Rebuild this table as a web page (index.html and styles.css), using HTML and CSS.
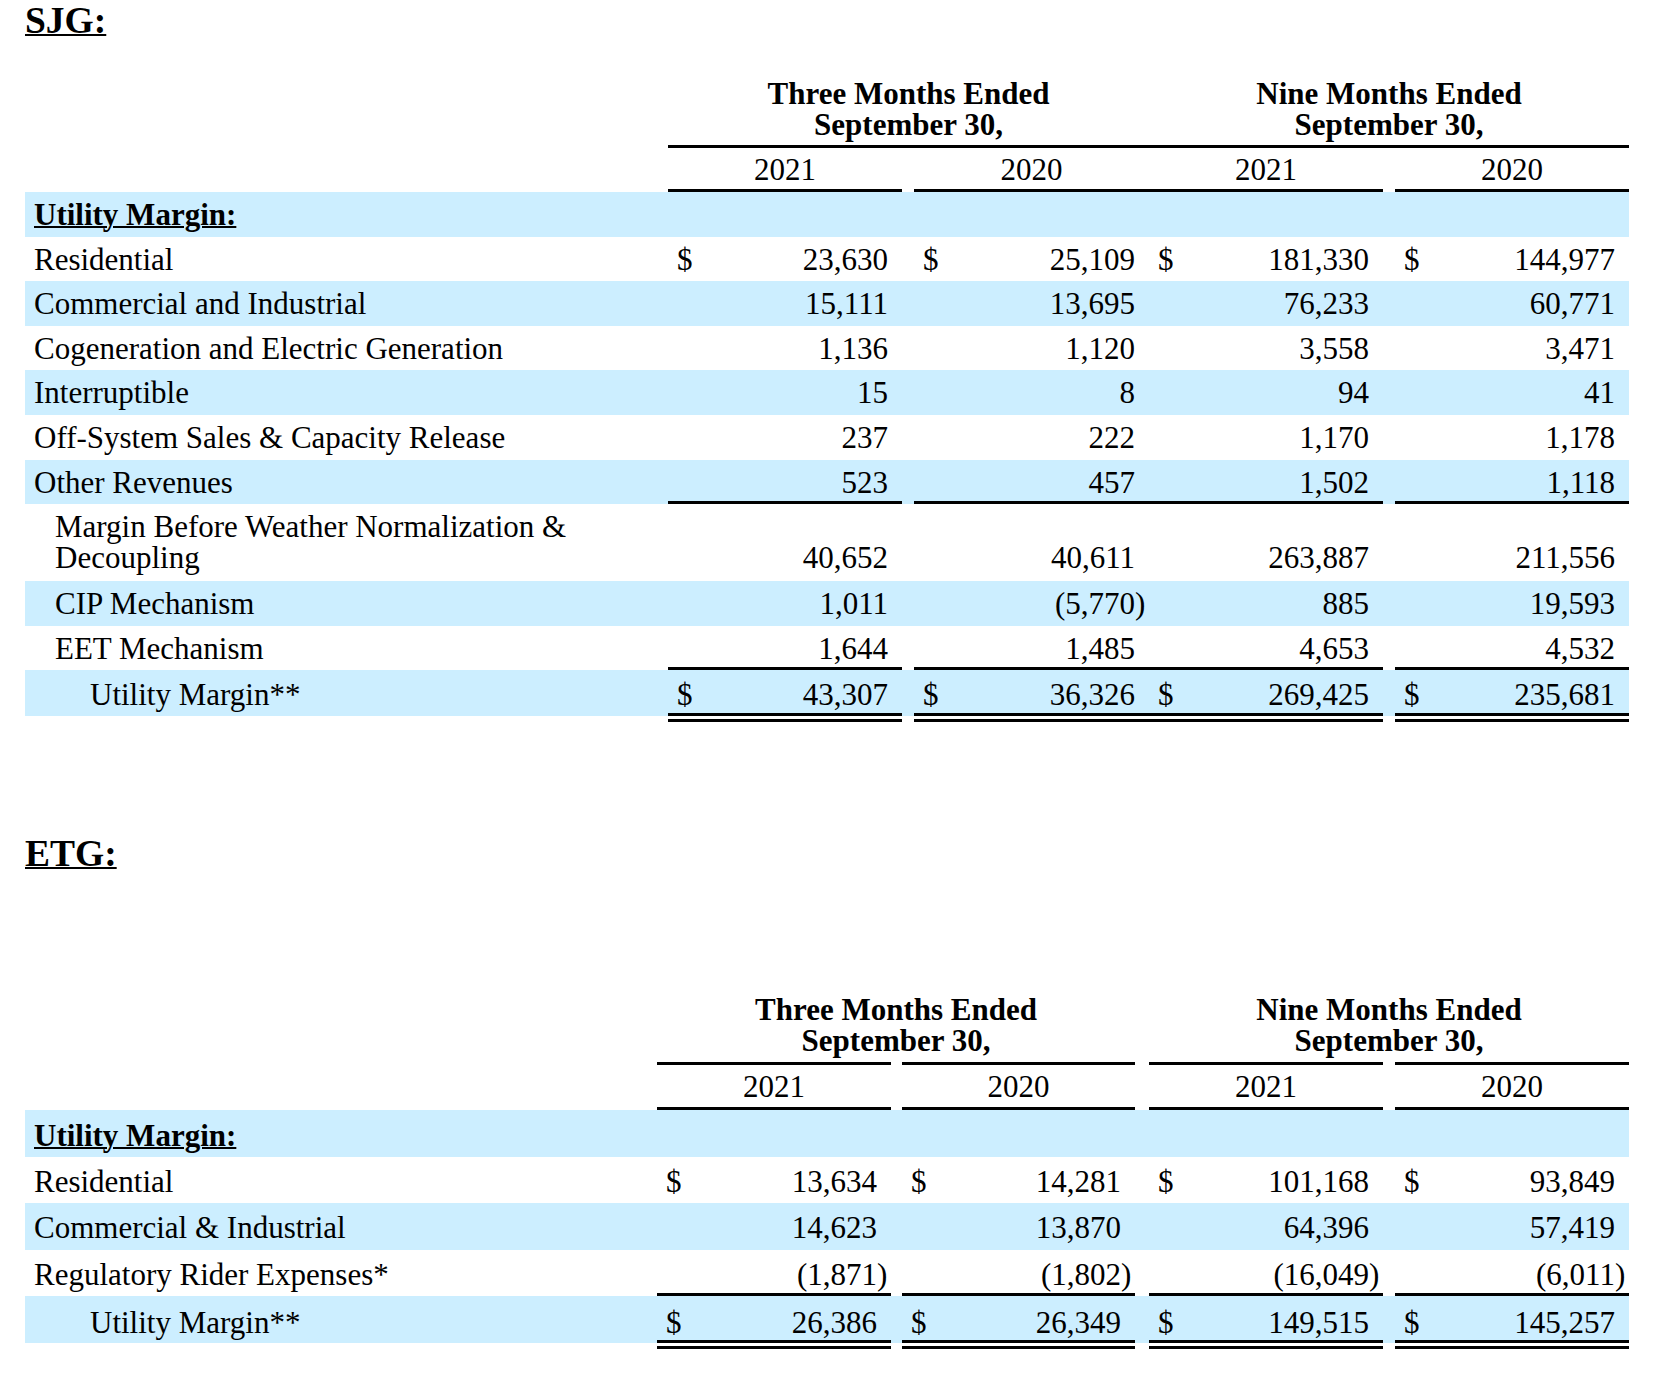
FILE: index.html
```html
<!DOCTYPE html>
<html>
<head>
<meta charset="utf-8">
<title>Utility Margin</title>
<link rel="stylesheet" href="styles.css">
</head>
<body>
<section class="sec sjg">
  <h2 class="title">SJG:</h2>
  <div class="hdr">
    <div class="lbl"></div>
    <div class="grp g1">Three Months Ended<br>September 30,</div>
    <div class="grp g2">Nine Months Ended<br>September 30,</div>
  </div>
  <div class="row yrs">
    <div class="lbl"></div>
    <div class="num c1">2021</div>
    <div class="num c2">2020</div>
    <div class="num c3">2021</div>
    <div class="num c4">2020</div>
  </div>
  <div class="row band"><div class="lbl"><b class="u">Utility Margin:</b></div></div>
  <div class="row">
    <div class="lbl">Residential</div>
    <div class="num c1"><span>$</span><span class="v">23,630</span></div>
    <div class="num c2"><span>$</span><span class="v">25,109</span></div>
    <div class="num c3"><span>$</span><span class="v">181,330</span></div>
    <div class="num c4"><span>$</span><span class="v">144,977</span></div>
  </div>
  <div class="row band">
    <div class="lbl">Commercial and Industrial</div>
    <div class="num c1"><span class="v">15,111</span></div>
    <div class="num c2"><span class="v">13,695</span></div>
    <div class="num c3"><span class="v">76,233</span></div>
    <div class="num c4"><span class="v">60,771</span></div>
  </div>
  <div class="row">
    <div class="lbl">Cogeneration and Electric Generation</div>
    <div class="num c1"><span class="v">1,136</span></div>
    <div class="num c2"><span class="v">1,120</span></div>
    <div class="num c3"><span class="v">3,558</span></div>
    <div class="num c4"><span class="v">3,471</span></div>
  </div>
  <div class="row band">
    <div class="lbl">Interruptible</div>
    <div class="num c1"><span class="v">15</span></div>
    <div class="num c2"><span class="v">8</span></div>
    <div class="num c3"><span class="v">94</span></div>
    <div class="num c4"><span class="v">41</span></div>
  </div>
  <div class="row">
    <div class="lbl">Off-System Sales &amp; Capacity Release</div>
    <div class="num c1"><span class="v">237</span></div>
    <div class="num c2"><span class="v">222</span></div>
    <div class="num c3"><span class="v">1,170</span></div>
    <div class="num c4"><span class="v">1,178</span></div>
  </div>
  <div class="row band ul">
    <div class="lbl">Other Revenues</div>
    <div class="num c1"><span class="v">523</span></div>
    <div class="num c2"><span class="v">457</span></div>
    <div class="num c3"><span class="v">1,502</span></div>
    <div class="num c4"><span class="v">1,118</span></div>
  </div>
  <div class="row tall">
    <div class="lbl i1">Margin Before Weather Normalization &amp; Decoupling</div>
    <div class="num c1"><span class="v">40,652</span></div>
    <div class="num c2"><span class="v">40,611</span></div>
    <div class="num c3"><span class="v">263,887</span></div>
    <div class="num c4"><span class="v">211,556</span></div>
  </div>
  <div class="row band">
    <div class="lbl i1">CIP Mechanism</div>
    <div class="num c1"><span class="v">1,011</span></div>
    <div class="num c2"><span class="v">(5,770<span class="rp">)</span></span></div>
    <div class="num c3"><span class="v">885</span></div>
    <div class="num c4"><span class="v">19,593</span></div>
  </div>
  <div class="row ul">
    <div class="lbl i1">EET Mechanism</div>
    <div class="num c1"><span class="v">1,644</span></div>
    <div class="num c2"><span class="v">1,485</span></div>
    <div class="num c3"><span class="v">4,653</span></div>
    <div class="num c4"><span class="v">4,532</span></div>
  </div>
  <div class="row tot">
    <div class="lbl i2">Utility Margin**</div>
    <div class="num c1"><span>$</span><span class="v">43,307</span></div>
    <div class="num c2"><span>$</span><span class="v">36,326</span></div>
    <div class="num c3"><span>$</span><span class="v">269,425</span></div>
    <div class="num c4"><span>$</span><span class="v">235,681</span></div>
  </div>
</section>

<section class="sec etg">
  <h2 class="title">ETG:</h2>
  <div class="hdr">
    <div class="lbl"></div>
    <div class="grp g1">Three Months Ended<br>September 30,</div>
    <div class="grp g2">Nine Months Ended<br>September 30,</div>
  </div>
  <div class="row yrs">
    <div class="lbl"></div>
    <div class="num c1">2021</div>
    <div class="num c2">2020</div>
    <div class="num c3">2021</div>
    <div class="num c4">2020</div>
  </div>
  <div class="row band"><div class="lbl"><b class="u">Utility Margin:</b></div></div>
  <div class="row">
    <div class="lbl">Residential</div>
    <div class="num c1"><span>$</span><span class="v">13,634</span></div>
    <div class="num c2"><span>$</span><span class="v">14,281</span></div>
    <div class="num c3"><span>$</span><span class="v">101,168</span></div>
    <div class="num c4"><span>$</span><span class="v">93,849</span></div>
  </div>
  <div class="row band">
    <div class="lbl">Commercial &amp; Industrial</div>
    <div class="num c1"><span class="v">14,623</span></div>
    <div class="num c2"><span class="v">13,870</span></div>
    <div class="num c3"><span class="v">64,396</span></div>
    <div class="num c4"><span class="v">57,419</span></div>
  </div>
  <div class="row ul">
    <div class="lbl">Regulatory Rider Expenses*</div>
    <div class="num c1"><span class="v">(1,871<span class="rp">)</span></span></div>
    <div class="num c2"><span class="v">(1,802<span class="rp">)</span></span></div>
    <div class="num c3"><span class="v">(16,049<span class="rp">)</span></span></div>
    <div class="num c4"><span class="v">(6,011<span class="rp">)</span></span></div>
  </div>
  <div class="row tot">
    <div class="lbl i2">Utility Margin**</div>
    <div class="num c1"><span>$</span><span class="v">26,386</span></div>
    <div class="num c2"><span>$</span><span class="v">26,349</span></div>
    <div class="num c3"><span>$</span><span class="v">149,515</span></div>
    <div class="num c4"><span>$</span><span class="v">145,257</span></div>
  </div>
</section>
</body>
</html>
```

FILE: styles.css
```css
* { box-sizing: border-box; }

html, body {
  margin: 0;
  padding: 0;
  background: #ffffff;
}

body {
  color: #000000;
  font-family: "Liberation Serif", "Times New Roman", serif;
  font-size: 31px;
}

.sec {
  width: 1604px;
  margin-left: 25px;
}

.sjg {
  --lbl: 643px;
  --w1: 234px;
  --m2: 12px;
  --w2: 235px;
  --m3: 0px;
  --w3: 234px;
  --m4: 12px;
  --w4: 234px;
  --rh: 44.6px;
  --pt: 7px;
}

.etg {
  --lbl: 632px;
  --w1: 234px;
  --m2: 11px;
  --w2: 233px;
  --m3: 14px;
  --w3: 234px;
  --m4: 12px;
  --w4: 234px;
  --rh: 46.4px;
  --pt: 9.2px;
  margin-top: 112.5px;
}

.title {
  margin: 2px 0 0 0;
  font-size: 37.5px;
  line-height: 37px;
  font-weight: bold;
  text-decoration: underline;
  text-decoration-thickness: 2px;
}

.hdr {
  display: flex;
  font-weight: bold;
  line-height: 31px;
  text-align: center;
}
.sjg .hdr { margin-top: 38.5px; }
.etg .hdr { margin-top: 122.5px; }

.hdr .lbl { flex: 0 0 var(--lbl); }

.grp { padding-bottom: 5px; }
.sjg .grp { border-bottom: 3px solid #000; }
.etg .grp { padding-bottom: 5.5px; }

.g1 { flex: 0 0 calc(var(--w1) + var(--m2) + var(--w2)); }
.g2 { flex: 0 0 calc(var(--w3) + var(--m4) + var(--w4)); margin-left: var(--m3); }

.row {
  display: flex;
  height: var(--rh);
  line-height: 31px;
}

.lbl {
  flex: 0 0 var(--lbl);
  padding-left: 9px;
  padding-top: var(--pt);
}
.i1 { padding-left: 30px; }
.i2 { padding-left: 65px; }

.u {
  text-decoration: underline;
  text-decoration-thickness: 2px;
}

.num {
  display: flex;
  justify-content: space-between;
  padding: var(--pt) 14px 0 9px;
  white-space: nowrap;
}
.c1 { flex: 0 0 var(--w1); }
.c2 { flex: 0 0 var(--w2); margin-left: var(--m2); }
.c3 { flex: 0 0 var(--w3); margin-left: var(--m3); }
.c4 { flex: 0 0 var(--w4); margin-left: var(--m4); }

.v { margin-left: auto; }
.rp { margin-right: -0.333em; }

.band { background: #cceeff; }

.yrs .num {
  justify-content: center;
  padding: 6.5px 0 0 0;
  border-bottom: 3px solid #000;
}
.etg .yrs { height: 48.8px; }
.etg .yrs .num {
  border-top: 3px solid #000;
  padding-top: 6.8px;
}

.ul .num { border-bottom: 3px solid #000; }

.tall { height: 77px; }
.tall .num { padding-top: calc(var(--pt) + 31px); }

.tot {
  height: calc(var(--rh) + 7px);
  background: linear-gradient(#cceeff, #cceeff) top left / 100% calc(100% - 6px) no-repeat;
}
.tot .lbl,
.tot .num { padding-top: calc(var(--pt) + 1.5px); }
.tot .num { border-bottom: 9px double #000; }
```
